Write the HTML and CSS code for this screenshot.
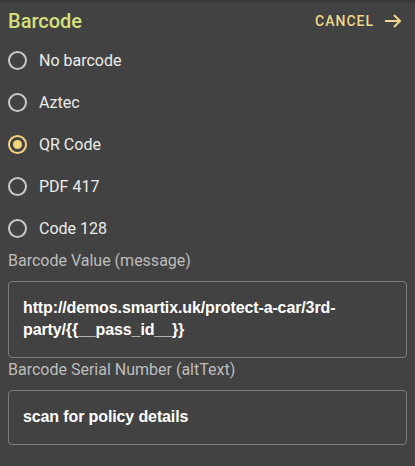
FILE: index.html
```
<!DOCTYPE html>
<html>
<head>
	<title>Barcode</title>
	<link rel="stylesheet" href="styles.css">
</head>
<body>
	<div class="panel">
		<div class="header">
			<h1 class="title">Barcode</h1>
			<button class="cancel">CANCEL
				<svg width="18" height="14" viewBox="0 0 18 14"><path d="M1 7h15M10 1l6 6-6 6" fill="none" stroke="currentColor" stroke-width="2"/></svg>
			</button>
		</div>

		<div class="options">
			<label class="option"><span class="radio"></span>No barcode</label>
			<label class="option"><span class="radio"></span>Aztec</label>
			<label class="option"><span class="radio checked"></span>QR Code</label>
			<label class="option"><span class="radio"></span>PDF 417</label>
			<label class="option"><span class="radio"></span>Code 128</label>
		</div>

		<div class="field">
			<div class="field-label">Barcode Value (message)</div>
			<div class="field-box">http://demos.smartix.uk/protect-a-car/3rd-party/{{__pass_id__}}</div>
		</div>

		<div class="field">
			<div class="field-label">Barcode Serial Number (altText)</div>
			<div class="field-box">scan for policy details</div>
		</div>
	</div>
</body>
</html>
```

FILE: styles.css
```
body{
	margin: 0;
	background: #424242;
	font-family: Roboto, "Liberation Sans", sans-serif;
}

.panel{
	border-top: 2px solid #373737;
	padding: 0 8px;
}

.header{
	display: flex;
	align-items: center;
	justify-content: space-between;
	height: 37px;
}

.title{
	margin: 0;
	font-size: 20px;
	font-weight: 500;
	color: #d5e07c;
}

.cancel{
	display: flex;
	align-items: center;
	gap: 10px;
	border: none;
	background: none;
	padding: 0 5px 0 0;
	font-family: inherit;
	font-size: 14px;
	font-weight: 500;
	letter-spacing: 1px;
	color: #f0d88a;
}

.options{
	display: flex;
	flex-direction: column;
}

.option{
	display: flex;
	align-items: center;
	gap: 12px;
	height: 42px;
	font-size: 16px;
	color: #ececec;
}

.radio{
	box-sizing: border-box;
	width: 19px;
	height: 19px;
	border: 2px solid #c9c9c9;
	border-radius: 50%;
	display: flex;
	align-items: center;
	justify-content: center;
}

.radio.checked{
	border-color: #f5d47c;
}

.radio.checked::after{
	content: "";
	width: 9px;
	height: 9px;
	border-radius: 50%;
	background: #f5d47c;
}

.field-label{
	line-height: 24px;
	font-size: 16px;
	color: #bdbdbd;
}

.field-box{
	margin-top: 8px;
	border: 1px solid #7c7c7c;
	border-radius: 4px;
	padding: 15px 14px 16px;
	font-family: "Liberation Sans", Arial, sans-serif;
	font-weight: bold;
	font-size: 16px;
	line-height: 22px;
	letter-spacing: -0.12px;
	color: #ffffff;
}
```
